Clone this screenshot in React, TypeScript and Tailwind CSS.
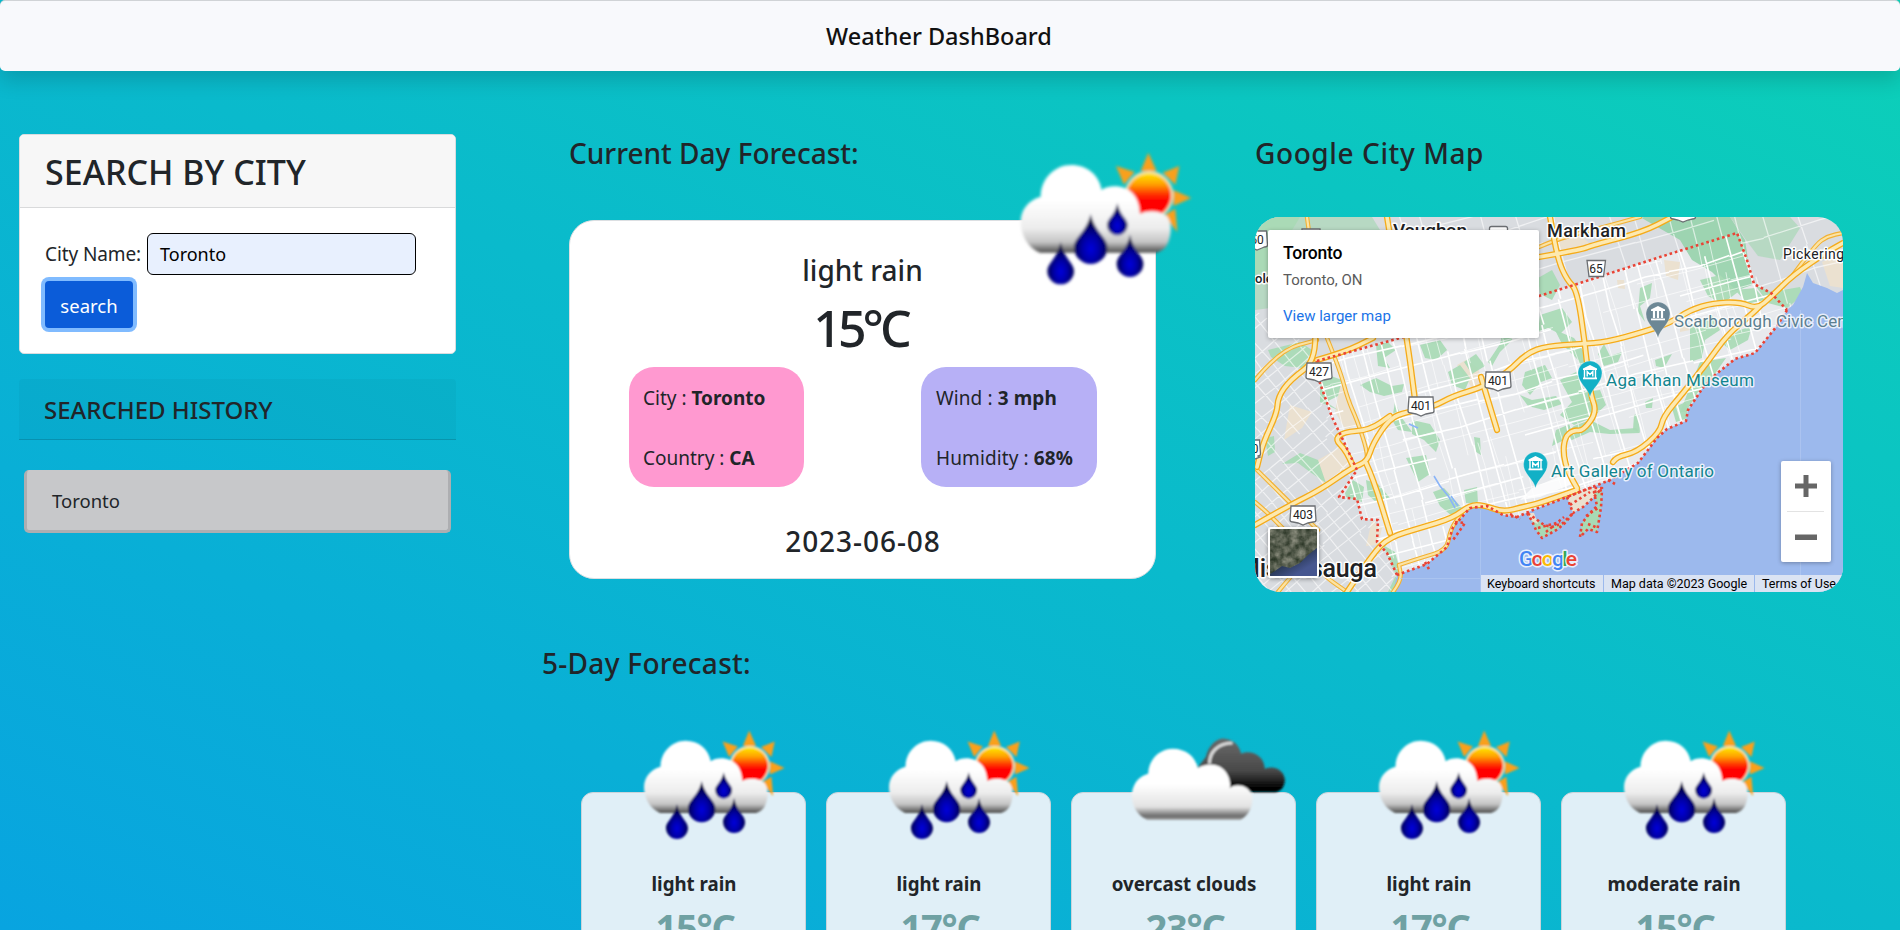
type Pt = [number, number];

const line = (pts: Pt[]) => "M" + pts.map((p) => p.join(" ")).join("L");

/* smooth curve through the midpoints of a polyline */
const curve = (pts: Pt[]) => {
  let d = `M${pts[0][0]} ${pts[0][1]}`;
  for (let i = 1; i < pts.length - 1; i++) {
    const mx = (pts[i][0] + pts[i + 1][0]) / 2;
    const my = (pts[i][1] + pts[i + 1][1]) / 2;
    d += `Q${pts[i][0]} ${pts[i][1]} ${mx} ${my}`;
  }
  const l = pts[pts.length - 1];
  return d + `L${l[0]} ${l[1]}`;
};

const rand = (n: number) => {
  const x = Math.sin(n * 127.1 + 11.7) * 43758.5453;
  return x - Math.floor(x);
};

const shore: Pt[] = [
  [1787, 310], [1777, 326], [1755, 353], [1735, 359], [1715, 375], [1702, 389], [1688, 410], [1686, 421],
  [1667, 429], [1657, 438], [1638, 463], [1610, 480], [1590, 488], [1567, 497], [1533, 510], [1517, 517],
  [1503, 515], [1487, 506], [1470, 508], [1453, 527], [1447, 547], [1427, 564], [1397, 575],
];
const west: Pt[] = [
  [1397, 575], [1387, 553], [1377, 542], [1378, 520], [1362, 519], [1357, 499], [1339, 497], [1357, 470],
  [1343, 440], [1332, 417], [1320, 383], [1317, 361],
];
const north: Pt[] = [
  [1317, 361], [1400, 338], [1539, 296], [1577, 284], [1660, 257], [1737, 233], [1747, 260], [1754, 284],
  [1771, 293], [1787, 310],
];
const lake: Pt[] = [
  ...shore, [1393, 592], [1843, 592], [1843, 290], [1837, 293], [1827, 288], [1813, 283], [1807, 273],
  [1803, 287], [1793, 305],
];
const city: Pt[] = [...north, ...shore, ...west];

const islands: Pt[][] = [
  [[1527, 513], [1532, 521], [1536, 530], [1542, 538], [1551, 533], [1558, 529], [1566, 522], [1573, 513], [1563, 523], [1552, 527], [1544, 525], [1536, 519]],
  [[1567, 497], [1573, 513], [1583, 507], [1593, 498], [1602, 488], [1590, 488]],
  [[1594, 492], [1602, 490], [1601, 507], [1599, 520], [1597, 532], [1588, 529], [1580, 537], [1582, 523], [1590, 513], [1597, 506]],
];

const greens: Pt[][] = [
  [[1255, 240], [1268, 217], [1372, 217], [1380, 230], [1330, 300], [1255, 310]],
  [[1268, 350], [1300, 342], [1312, 350], [1303, 368], [1285, 366], [1271, 357]],
  [[1282, 464], [1300, 453], [1318, 460], [1326, 483], [1310, 472], [1298, 463]],
  [[1640, 217], [1730, 217], [1745, 240], [1752, 285], [1732, 292], [1712, 272], [1692, 260], [1680, 240]],
  [[1730, 217], [1790, 217], [1800, 228], [1780, 260], [1758, 256], [1746, 240]],
  [[1755, 285], [1771, 292], [1800, 287], [1803, 295], [1787, 308], [1768, 303]],
  [[1735, 290], [1755, 288], [1765, 300], [1748, 304]],
  [[1538, 278], [1552, 270], [1560, 285], [1552, 300], [1540, 294]],
  [[1540, 315], [1562, 308], [1572, 322], [1560, 334], [1548, 328], [1538, 332]],
  [[1525, 372], [1545, 365], [1552, 378], [1541, 382], [1530, 395], [1522, 385]],
  [[1560, 380], [1576, 372], [1585, 392], [1600, 390], [1606, 405], [1592, 418], [1574, 425], [1560, 415], [1572, 402]],
  [[1574, 426], [1590, 420], [1610, 430], [1636, 428], [1640, 433], [1610, 434], [1590, 432], [1572, 440], [1562, 436]],
  [[1420, 345], [1440, 340], [1447, 350], [1436, 360], [1425, 358]],
  [[1448, 372], [1460, 365], [1470, 378], [1465, 390], [1452, 385]],
  [[1464, 362], [1476, 354], [1485, 366], [1472, 374]],
  [[1395, 402], [1402, 418], [1412, 432], [1398, 430], [1392, 420]],
  [[1412, 420], [1430, 424], [1440, 440], [1436, 452], [1424, 440], [1412, 434]],
  [[1406, 458], [1426, 455], [1430, 474], [1418, 482], [1412, 470]],
  [[1433, 492], [1444, 488], [1462, 508], [1452, 516], [1440, 506]],
  [[1464, 490], [1477, 487], [1478, 503], [1466, 503]],
  [[1353, 480], [1364, 487], [1362, 502], [1346, 497], [1345, 493]],
  [[1366, 480], [1378, 484], [1390, 498], [1376, 502], [1368, 495]],
  [[1383, 545], [1395, 552], [1400, 570], [1410, 578], [1396, 592], [1388, 592], [1396, 575]],
  [[1474, 437], [1480, 438], [1481, 455], [1476, 452]],
  [[1556, 430], [1570, 424], [1572, 436], [1560, 442], [1552, 446]],
  [[1690, 325], [1712, 315], [1720, 330], [1705, 340], [1702, 358], [1690, 362]],
  [[1722, 343], [1740, 330], [1752, 326], [1748, 340], [1730, 350]],
  [[1700, 362], [1726, 358], [1712, 378], [1698, 392], [1686, 412], [1680, 412]],
  [[1672, 408], [1686, 402], [1688, 418], [1676, 422]],
  [[1645, 402], [1653, 398], [1652, 408], [1646, 408]],
  [[1640, 288], [1652, 283], [1650, 298], [1640, 306], [1645, 322], [1638, 312]],
  [[1655, 360], [1672, 354], [1664, 368], [1656, 366]],
  [[1320, 372], [1342, 380], [1338, 396], [1326, 402], [1338, 410], [1320, 402]],
  [[1634, 415], [1638, 414], [1640, 432], [1633, 430]],
  [[1376, 345], [1388, 342], [1396, 350], [1384, 358], [1390, 368], [1378, 366]],
  [[1360, 385], [1376, 378], [1392, 386], [1404, 384], [1402, 392], [1384, 396], [1370, 392]],
  [[1505, 322], [1514, 318], [1512, 340], [1500, 352], [1492, 366], [1488, 362], [1500, 344]],
  [[1520, 395], [1532, 400], [1556, 396], [1562, 404], [1544, 410], [1528, 406]],
  [[1555, 330], [1574, 338], [1590, 360], [1598, 380], [1588, 384], [1578, 360], [1562, 344]],
  [[1604, 344], [1610, 356], [1622, 352], [1618, 362], [1604, 366], [1598, 354]],
  [[1255, 217], [1300, 217], [1268, 270], [1255, 275]],
  [[1265, 438], [1274, 436], [1275, 452], [1268, 456]],
  [[1700, 280], [1720, 275], [1738, 292], [1722, 304], [1708, 296]],
];

const sands: Pt[][] = [
  [[1340, 385], [1352, 400], [1356, 425], [1346, 430], [1335, 412]],
  [[1290, 405], [1312, 412], [1302, 428], [1284, 440]],
  [[1318, 460], [1342, 446], [1352, 464], [1322, 484]],
  [[1457, 365], [1466, 360], [1478, 368], [1484, 386], [1472, 388]],
  [[1555, 238], [1575, 230], [1590, 244], [1560, 256]],
  [[1664, 260], [1680, 262], [1678, 280], [1666, 276]],
  [[1617, 280], [1624, 280], [1625, 289], [1618, 288]],
  [[1822, 262], [1843, 250], [1843, 288], [1830, 286]],
  [[1372, 520], [1382, 528], [1378, 545], [1366, 546]],
  [[1680, 316], [1690, 330], [1680, 332]],
];

const highways: Pt[][] = [
  [[1255, 525], [1290, 505], [1320, 490], [1353, 467], [1367, 462], [1373, 443], [1390, 418], [1407, 412], [1433, 407], [1453, 396], [1483, 387], [1507, 373], [1527, 353], [1547, 346], [1580, 344], [1607, 342], [1643, 332], [1670, 323], [1690, 310], [1713, 303], [1740, 302], [1757, 309], [1771, 297], [1793, 275], [1827, 252], [1843, 243]],
  [[1315, 330], [1317, 360], [1290, 380], [1278, 397], [1277, 413], [1263, 443], [1257, 467]],
  [[1317, 360], [1345, 352], [1373, 338]],
  [[1353, 466], [1346, 450], [1335, 440], [1343, 432], [1370, 430], [1390, 416]],
  [[1366, 463], [1373, 478], [1390, 533]],
  [[1347, 592], [1373, 553], [1390, 537], [1420, 528], [1453, 518], [1470, 505], [1483, 505], [1503, 512], [1523, 507], [1540, 503], [1577, 490]],
  [[1577, 488], [1568, 473], [1563, 453], [1565, 437], [1573, 430], [1583, 431], [1597, 412], [1590, 393], [1585, 343], [1577, 290], [1567, 280], [1558, 260], [1550, 217]],
  [[1387, 217], [1407, 338], [1415, 400]],
  [[1481, 377], [1487, 397], [1497, 430]],
  [[1613, 462], [1616, 457], [1637, 452], [1660, 432], [1663, 417], [1683, 393], [1707, 363], [1727, 335], [1753, 313], [1760, 306]],
  [[1539, 257], [1580, 250], [1593, 245], [1643, 232], [1672, 217]],
];
const minorHighways: Pt[][] = [
  [[1255, 380], [1280, 350], [1317, 340]],
  [[1327, 338], [1340, 370], [1348, 400], [1357, 420], [1367, 450], [1367, 463]],
  [[1539, 247], [1560, 238], [1600, 228], [1640, 217]],
  [[1307, 217], [1309, 232]],
  [[1255, 468], [1290, 503], [1318, 530]],
  [[1255, 502], [1280, 523], [1320, 573], [1347, 592]],
  [[1793, 275], [1815, 245], [1828, 236], [1843, 233]],
  [[1399, 565], [1420, 558], [1447, 550], [1450, 530], [1462, 512]],
  [[1393, 592], [1402, 580], [1399, 565]],
  [[1278, 592], [1300, 565], [1316, 555]],
];

const grid = (cx: number, cy: number, deg: number, stepU: number, stepV: number, ext: number, seed: number, keep: number) => {
  const a = (deg * Math.PI) / 180;
  const c = Math.cos(a);
  const s = Math.sin(a);
  const at = (u: number, v: number): Pt => [+(cx + u * c - v * s).toFixed(1), +(cy + u * s + v * c).toFixed(1)];
  let d = "";
  let k = seed;
  for (const flip of [false, true]) {
    const step = flip ? stepV : stepU;
    for (let u = -ext; u <= ext; u += step * (0.7 + rand(k++) * 0.6)) {
      let v = -ext;
      while (v < ext) {
        const len = 40 + rand(k++) * 130;
        const o = (rand(k++) - 0.5) * 4;
        const bend = (rand(k++) - 0.5) * 6;
        if (rand(k++) < keep) {
          const pts: Pt[] = [[u + o, v], [u + o + bend, v + len / 2], [u + o, v + len]];
          d += line(pts.map(([p, q]) => (flip ? at(q, p) : at(p, q))));
        }
        v += len;
      }
    }
  }
  return d;
};

const cityMajor = grid(1540, 400, -15, 20, 22, 340, 3, 0.9);
const cityMinor = grid(1545, 405, -15, 12, 15, 340, 700, 0.55);
const suburbs = grid(1300, 480, -40, 15, 14, 170, 90, 0.9);
const suburbsNorth = grid(1640, 240, -16, 28, 26, 260, 55, 0.8);

function Shield({ x, y, t, w = 26 }: { x: number; y: number; t: string; w?: number }) {
  return (
    <g>
      <path
        d={`M${x - w / 2 + 1} ${y - 9}H${x + w / 2 - 1}L${x + w / 2} ${y + 5}Q${x + w / 2} ${y + 7} ${x + w / 2 - 3} ${y + 7}L${x + 5} ${y + 8}L${x} ${y + 10}L${x - 5} ${y + 8}L${x - w / 2 + 3} ${y + 7}Q${x - w / 2} ${y + 7} ${x - w / 2} ${y + 5}Z`}
        fill="#fff"
        stroke="#6b6e72"
        strokeWidth="1.3"
      />
      <text x={x} y={y + 4} textAnchor="middle" fontSize="12" fill="#222">
        {t}
      </text>
    </g>
  );
}

function Pin({ x, y, color, letter }: { x: number; y: number; color: string; letter?: boolean }) {
  return (
    <g transform={`translate(${x} ${y})`}>
      <path d="M0 24C-2 15 -12 10 -12 0A12 12 0 0 1 12 0C12 10 2 15 0 24Z" fill={color} stroke="#fff" strokeOpacity=".35" strokeWidth=".8" />
      <path d="M-7 -4.500L0 -8L7 -4.500V-3H-7Z" fill="#fff" />
      <path d="M-7 4.500H7V6.300H-7Z" fill="#fff" />
      {letter ? (
        <path d="M-5.500 -3V5M5.500 -3V5M-2.800 3.500V-1.500L0 1.500L2.800 -1.500V3.500" stroke="#fff" strokeWidth="1.400" fill="none" />
      ) : (
        <path d="M-4 -3V4M0 -3V4M4 -3V4" stroke="#fff" strokeWidth="2.200" />
      )}
    </g>
  );
}

function CityMap() {
  return (
    <svg viewBox="1255 217 588 375" className="block h-full w-full font-[Roboto,sans-serif]">
      <defs>
        <clipPath id="city-clip"><path d={line(city) + "Z"} /></clipPath>
        <clipPath id="north-clip"><path d={line([...north, [1843, 310], [1843, 217], [1370, 217]]) + "Z"} /></clipPath>
        <clipPath id="west-clip"><path d={line([...west, [1300, 340], [1255, 310], [1255, 592], [1397, 592]]) + "Z"} /></clipPath>
      </defs>
      <rect x="1255" y="217" width="588" height="375" fill="#d9dce0" />
      <path d={line(city) + "Z"} fill="#e8eaed" />
      {sands.map((s, i) => <path key={i} d={line(s) + "Z"} fill="#ebe1d0" />)}
      {greens.map((g, i) => <path key={i} d={line(g) + "Z"} fill={i < 1 || i === 4 ? "#b4d8c0" : i === 3 ? "#98d2ac" : "#a8dab5"} opacity=".92" />)}
      <g fill="none" stroke="#fff">
        <path d={suburbs} clipPath="url(#west-clip)" strokeWidth="1.200" opacity=".6" />
        <path d={suburbsNorth} clipPath="url(#north-clip)" strokeWidth="1.300" opacity=".6" />
        <g clipPath="url(#city-clip)">
          <path d={cityMinor} strokeWidth=".9" opacity=".7" />
          <path d={cityMajor} strokeWidth="1.600" />
        </g>
      </g>
      <path d={line([[1520, 500], [1532, 488], [1570, 472], [1572, 484], [1540, 497]]) + "Z"} fill="#fff" opacity=".8" />
      <path d={line(lake) + "Z"} fill="#9cb9ed" />
      <path d="M1434 476L1440 486L1449 497L1455 508M1451 496L1458 506M1409 424L1418 428" stroke="#8ab4f8" strokeWidth="1.600" fill="none" />
      {islands.map((s, i) => <path key={i} d={line(s) + "Z"} fill={i === 1 ? "#ebe1d0" : "#a8dab5"} />)}
      <path d={line([[1527, 513], [1534, 513], [1538, 524], [1532, 521]]) + "Z"} fill="#ebe1d0" />
      <g fill="none" strokeLinejoin="round" strokeLinecap="round">
        {minorHighways.map((h, i) => <path key={i} d={curve(h)} stroke="#f2b133" strokeWidth="4.400" />)}
        {minorHighways.map((h, i) => <path key={i} d={curve(h)} stroke="#fbe3a4" strokeWidth="2.200" />)}
        {highways.map((h, i) => <path key={i} d={curve(h)} stroke="#f5ab19" strokeWidth="6.200" />)}
        {highways.map((h, i) => <path key={i} d={curve(h)} stroke="#fde9b0" strokeWidth="3.600" />)}
        <g stroke="#ea4335" strokeWidth="2.600" strokeLinecap="butt" strokeDasharray="2.600 2.900">
          <path d={line(north)} />
          <path d={line(shore)} />
          <path d={line(west)} />
          {islands.map((s, i) => <path key={i} d={line(s) + "Z"} />)}
          <path d="M1538 528L1560 522M1546 532L1564 517M1455 522L1465 523L1458 533L1453 540M1510 514L1520 519M1425 562L1430 571" />
          <path d="M1570 505L1590 492M1586 516L1598 508M1588 524L1598 528M1608 480L1615 484" />
        </g>
      </g>
      <path d="M1480.500 510V592M1800.500 310V592M1400 578.500H1480" stroke="#b5cbf2" strokeWidth="1" opacity=".6" />

      <Shield x={1319} y={372} t="427" />
      <Shield x={1498} y={381} t="401" />
      <Shield x={1421} y={406} t="401" />
      <Shield x={1303} y={515} t="403" />
      <Shield x={1255} y={449} t="0" w={11} />
      <Shield x={1257} y={240} t="50" w={21} />
      <Shield x={1311} y={238} t="" w={20} />
      <Shield x={1683} y={212} t="" w={25} />
      <rect x="1489.500" y="226.500" width="18" height="14" rx="2" fill="#fff" stroke="#6b6e72" strokeWidth="1.300" />
      <path d="M1587 260.500H1605.500L1603.500 276.500H1589Z" fill="#fff" stroke="#6b6e72" strokeWidth="1.300" />
      <text x="1596" y="273" textAnchor="middle" fontSize="12" fill="#222">65</text>

      <Pin x={1658} y={314} color="#6c8795" />
      <Pin x={1590} y={373} color="#12b0c6" letter />
      <Pin x={1535.5} y={464} color="#12b0c6" letter />

      <g stroke="#fff" strokeWidth="3" strokeLinejoin="round" paintOrder="stroke">
        <g fill="#202124" fontWeight="500">
          <text x="1393" y="237" fontSize="19" textLength="74">Vaughan</text>
          <text x="1547" y="237" fontSize="18" textLength="79">Markham</text>
          <text x="1238" y="577" fontSize="25" textLength="139">Mississauga</text>
          <text x="1255" y="283" fontSize="13">ole</text>
        </g>
        <text x="1783" y="259" fontSize="14" fill="#202124" textLength="61">Pickering</text>
        <text x="1674" y="327" fontSize="17" fill="#5c7f90" strokeOpacity=".75" textLength="193">Scarborough Civic Centre</text>
        <text x="1606" y="386" fontSize="17" fill="#12858f" strokeOpacity=".8" textLength="148">Aga Khan Museum</text>
        <text x="1551" y="477" fontSize="17" fill="#12858f" strokeOpacity=".8" textLength="163">Art Gallery of Ontario</text>
        <text x="1519" y="566" fontSize="21" fontWeight="500" strokeOpacity=".8" textLength="58">
          <tspan fill="#4285f4">G</tspan><tspan fill="#ea4335">o</tspan><tspan fill="#fbbc04">o</tspan>
          <tspan fill="#4285f4">g</tspan><tspan fill="#34a853">l</tspan><tspan fill="#ea4335">e</tspan>
        </text>
      </g>
    </svg>
  );
}

function Drop({ x, top, bottom, w }: { x: number; top: number; bottom: number; w: number }) {
  const r = w / 2;
  const cy = bottom - r;
  return (
    <path
      d={`M${x} ${top}C${x + r * 0.25} ${cy - r * 0.9} ${x + r} ${cy - r * 0.6} ${x + r} ${cy}A${r} ${r} 0 0 1 ${x - r} ${cy}C${x - r} ${cy - r * 0.6} ${x - r * 0.25} ${cy - r * 0.9} ${x} ${top}Z`}
      fill="url(#drop)"
    />
  );
}

function RainIcon({ className }: { className: string }) {
  return (
    <svg viewBox="0 0 630 480" className={className}>
      <defs>
        <linearGradient id="sun" x1="0" y1="0" x2="0" y2="1">
          <stop offset="0" stopColor="#ffe600" />
          <stop offset=".25" stopColor="#ffa000" />
          <stop offset=".48" stopColor="#ff3000" />
          <stop offset=".62" stopColor="#ff0000" />
        </linearGradient>
        <linearGradient id="cloud" x1="0" y1="0" x2="0" y2="1">
          <stop offset=".4" stopColor="#fff" />
          <stop offset=".72" stopColor="#ededed" />
          <stop offset=".88" stopColor="#c4c4c4" />
          <stop offset="1" stopColor="#4a4a4a" />
        </linearGradient>
        <radialGradient id="drop" cx=".5" cy=".7" r=".55">
          <stop offset="0" stopColor="#0000dc" />
          <stop offset=".45" stopColor="#0000a8" />
          <stop offset="1" stopColor="#00003e" />
        </radialGradient>
        <filter id="soft"><feGaussianBlur stdDeviation="4" /></filter>
      </defs>
      <g filter="url(#soft)">
        <g fill="#f9a01b">
          <path d="M445 38L470 94H422Z" />
          <path d="M538 78L526 134L488 98Z" />
          <path d="M348 78L404 96L372 134Z" />
          <path d="M574 174L520 198V150Z" />
          <path d="M532 276L492 226L526 206Z" />
        </g>
        <circle cx="447" cy="166" r="73" fill="#f6e3b8" />
        <circle cx="447" cy="166" r="66" fill="url(#sun)" />
        <path
          d="M120 338C85 325 62 285 62 245C62 210 85 180 122 170C122 115 165 75 213 75C262 75 297 105 305 150C320 138 350 135 375 145C405 158 418 185 420 222C440 210 480 210 500 228C515 245 515 275 507 300C500 322 490 332 470 338Z"
          fill="url(#cloud)"
        />
        <Drop x={272} top={222} bottom={372} w={100} />
        <Drop x={352} top={190} bottom={286} w={62} />
        <Drop x={182} top={306} bottom={433} w={80} />
        <Drop x={390} top={284} bottom={411} w={80} />
      </g>
    </svg>
  );
}

function CloudsIcon({ className }: { className: string }) {
  return (
    <svg viewBox="199.5 61 519 396" className={className}>
      <defs>
        <linearGradient id="dark" x1="0" y1="0" x2="0" y2="1">
          <stop offset="0" stopColor="#6a6a6a" />
          <stop offset=".6" stopColor="#484848" />
          <stop offset=".92" stopColor="#000" />
        </linearGradient>
        <linearGradient id="front" x1="0" y1="0" x2="0" y2="1">
          <stop offset=".5" stopColor="#fff" />
          <stop offset=".82" stopColor="#e2e2e2" />
          <stop offset=".95" stopColor="#6a6a6a" />
          <stop offset="1" stopColor="#999" />
        </linearGradient>
        <filter id="soft2"><feGaussianBlur stdDeviation="3.2" /></filter>
      </defs>
      <g filter="url(#soft2)">
        <path d="M440 205L466 172C475 135 500 115 522 117C550 120 565 135 572 162C600 150 640 165 643 207C675 195 705 215 703 245C700 265 690 275 675 278L600 278L520 280Z" fill="url(#dark)" />
        <path d="M477 192C476 160 500 130 546 130" stroke="#ddd" strokeWidth="9" fill="none" />
        <path d="M290 360C255 345 242 310 244 280C250 245 270 228 293 222C295 175 330 147 367 147C405 147 435 170 442 205C470 188 510 190 528 220C538 235 540 250 538 265C555 250 592 255 604 285C610 310 600 345 570 360Z" fill="url(#front)" />
      </g>
    </svg>
  );
}

const days = [
  { text: "light rain", temp: "15°C", rain: true },
  { text: "light rain", temp: "17°C", rain: true },
  { text: "overcast clouds", temp: "23°C", rain: false },
  { text: "light rain", temp: "17°C", rain: true },
  { text: "moderate rain", temp: "15°C", rain: true },
];

export default function App() {
  return (
    <div className="h-[930px] w-full overflow-hidden bg-[linear-gradient(to_top_right,#08a4e0_0%,#0cd0b8_100%)] pt-px font-['Noto_Sans',sans-serif] text-[#212529]">
      <header className="flex h-[70px] items-center justify-center rounded-[5px] bg-[#f8f9fc] pt-px pr-[22px] shadow-[0_10px_20px_rgba(0,0,0,0.15),0_-1px_0_#d5d8db]">
        <h1 className="text-[23.5px] font-medium text-[#111]">Weather DashBoard</h1>
      </header>

      <div className="flex">
        <aside className="mt-[63px] ml-[19px] w-[437px] shrink-0">
          <section className="h-[220px] rounded-[5px] border border-[#d9dcdf] bg-white">
            <h2 className="flex h-[73px] items-center rounded-t-[4px] border-b border-[#d9dadb] bg-[#f7f7f7] pt-[2px] pl-[25px] text-[34px] font-medium">SEARCH BY CITY</h2>
            <div className="pt-[25px] pl-[25px]">
              <div className="flex items-center">
                <label className="w-[102px] pt-px text-[19px] tracking-[-0.1px]">City Name:</label>
                <span className="flex h-[42px] w-[269px] items-center rounded-[6px] border border-black bg-[#e8f0fe] pt-px pl-3 text-[18px] text-black">Toronto</span>
              </div>
              <button className="mt-[6px] h-[47px] w-[88px] rounded-[4px] bg-[#0b5cd9] pt-[3px] text-[18.5px] text-white shadow-[0_0_0_4px_#80bbff]">search</button>
            </div>
          </section>

          <h2 className="mt-[25px] flex h-[61px] items-center rounded-t-[4px] border-b border-black/15 bg-black/[0.03] pt-[2px] pl-[25px] text-[24px] font-medium">SEARCHED HISTORY</h2>
          <div className="mx-[5px] mt-[30px] flex h-[63px] items-center rounded-[5px] border-3 border-t-0 border-[#adaeb1] bg-[#c7c8ca] pt-[2px] pl-[25px] text-[18.5px]">Toronto</div>
        </aside>

        <main className="ml-[85px] flex-1">
          <div className="flex">
            <section className="mt-[62px] ml-[28px] w-[587px]">
              <h2 className="text-[28px] leading-[40px] font-medium whitespace-nowrap">Current Day Forecast:</h2>
              <div className="relative mt-[47px] h-[359px] rounded-[25px] border border-[#dcdfe2] bg-white pt-[29px] text-center">
                <h3 className="text-[28px] leading-[40px] font-medium">light rain</h3>
                <h3 className="mt-2 text-[50px] leading-[60px] font-medium tracking-[-4px] pr-1">15°C</h3>
                <div className="mt-[9px] flex justify-between pr-[58px] pl-[59px] text-left text-[19px] leading-[60px] whitespace-nowrap">
                  <div className="h-[120px] w-[175px] rounded-[25px] bg-[#ff99d0] pt-px pl-[14px]">
                    <p>City : <b>Toronto</b></p>
                    <p>Country : <b>CA</b></p>
                  </div>
                  <div className="h-[120px] w-[176px] rounded-[25px] bg-[#b7b0f6] pt-px pl-[15px] tracking-[0.1px]">
                    <p>Wind : <b>3 mph</b></p>
                    <p>Humidity : <b>68%</b></p>
                  </div>
                </div>
                <h3 className="mt-[34px] pl-px text-[28px] leading-[40px] font-medium tracking-[0.95px]">2023-06-08</h3>
                <RainIcon className="absolute top-[-81px] left-[430px] h-[160px] w-[210px]" />
              </div>
            </section>

            <section className="mt-[62px] ml-[99px] w-[588px]">
              <h2 className="text-[28px] leading-[40px] font-medium tracking-[0.6px] whitespace-nowrap">Google City Map</h2>
              <div className="relative mt-[44px] h-[375px] overflow-hidden rounded-[25px] font-[Roboto,sans-serif]">
                <CityMap />
                <div className="absolute top-[13px] left-[13px] h-[108px] w-[271px] rounded-[2px] bg-white pl-[15px] shadow-[0_1px_4px_rgba(0,0,0,0.3)]">
                  <p className="pt-[10px] text-[17.5px] leading-[26px] font-medium tracking-[-0.2px] text-black">Toronto</p>
                  <p className="mt-[2px] text-[15px] leading-[24px] text-[#5b5b5b]">Toronto, ON</p>
                  <p className="mt-[12px] text-[15px] leading-[24px]"><a className="text-[#1a73e8]">View larger map</a></p>
                </div>
                <div className="absolute top-[310px] left-[13px] h-[51px] w-[51px] overflow-hidden rounded-[3px] border-2 border-white shadow-[0_1px_4px_rgba(0,0,0,0.4)]">
                  <svg viewBox="0 0 47 47" className="block h-full w-full">
                    <defs>
                      <filter id="ground" x="0" y="0" width="1" height="1" colorInterpolationFilters="sRGB">
                        <feTurbulence type="fractalNoise" baseFrequency=".14" numOctaves="3" seed="4" />
                        <feColorMatrix values="0.55 0 0 0 .08 0.5 0 0 0 .13 0.5 0 0 0 .07 0 0 0 0 1" />
                      </filter>
                      <linearGradient id="water" x1="0" y1="0" x2="1" y2="1">
                        <stop offset=".3" stopColor="#1d2b3c" />
                        <stop offset=".75" stopColor="#46568f" />
                      </linearGradient>
                    </defs>
                    <rect width="47" height="47" filter="url(#ground)" />
                    <path d="M0 45L5 42L12 37L20 39L30 34L38 26L47 19V47H0Z" fill="url(#water)" />
                  </svg>
                </div>
                <div className="absolute top-[244px] left-[526px] h-[101px] w-[50px] rounded-[2px] bg-white shadow-[0_1px_4px_rgba(0,0,0,0.3)]">
                  <svg viewBox="0 0 50 101" className="block h-full w-full" fill="#666">
                    <path d="M14 22.500H36V27.500H14Z" />
                    <path d="M22.500 14H27.500V36H22.500Z" />
                    <path d="M6 50H43V51H6Z" fill="#e3e3e3" />
                    <path d="M14 73.500H36V79H14Z" />
                  </svg>
                </div>
                <div className="absolute right-0 bottom-0 flex h-[17px] w-[362px] items-center text-[12.5px] whitespace-nowrap text-black *:h-full *:bg-[#f5f5f5]/70 *:leading-[17px]">
                  <span className="w-[122px] pl-[6px]">Keyboard shortcuts</span>
                  <span className="ml-px w-[150px] pl-[7px]">Map data ©2023 Google</span>
                  <span className="ml-px flex-1 pl-[7px]">Terms of Use</span>
                </div>
              </div>
            </section>
          </div>

          <section className="mt-[51px]">
            <h2 className="pl-px text-[28px] leading-[40px] font-medium tracking-[0.3px]">5-Day Forecast:</h2>
            <div className="mt-[109px] ml-10 flex gap-5">
              {days.map((d, i) => (
                <article key={i} className="relative h-[300px] w-[225px] rounded-t-[12px] border border-[#c9d3da] bg-[#e0eff7] pt-[76px] text-center">
                  {d.rain ? (
                    <RainIcon className="absolute top-[-73px] left-[45px] h-[132px] w-[173px]" />
                  ) : (
                    <CloudsIcon className="absolute top-[-73px] left-[45px] h-[132px] w-[173px]" />
                  )}
                  <h3 className="pl-px text-[18.7px] leading-[30px] font-bold">{d.text}</h3>
                  <h3 className="mt-[3px] pl-[3px] text-[38px] leading-[50px] font-bold tracking-[-1.2px] text-[#6fa1a3]">{d.temp}</h3>
                </article>
              ))}
            </div>
          </section>
        </main>
      </div>
    </div>
  );
}
